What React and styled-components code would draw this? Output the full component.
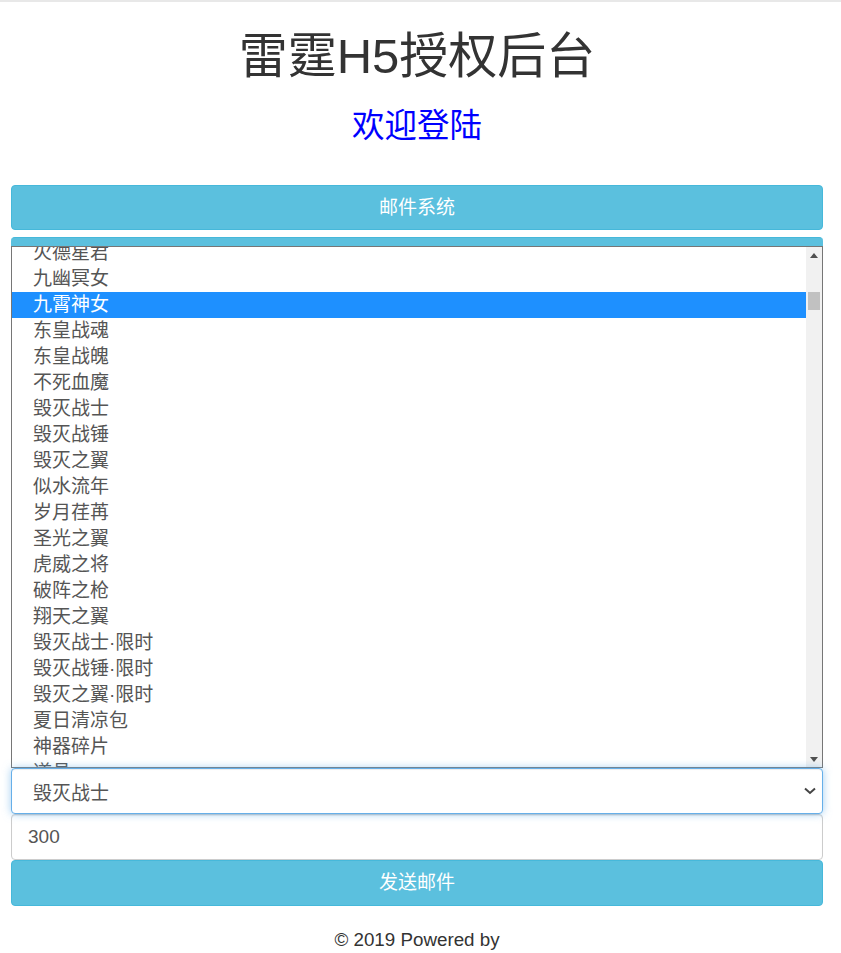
import React from "react";
import styled, { createGlobalStyle } from "styled-components";

const FONT = `"Liberation Sans", "Noto Sans CJK SC", sans-serif`;

const Global = createGlobalStyle`
  html, body { margin: 0; padding: 0; background: #fff; }
  body { font-family: ${FONT}; color: #333; }
  * { box-sizing: border-box; }
`;

const Page = styled.div`
  border-top: 2px solid #e8e8e8;
  padding: 0 18px 0 11px;
  display: flex;
  flex-direction: column;
`;

const Title = styled.h1`
  margin: 28px 0 0;
  font-size: 49px;
  line-height: 52px;
  font-weight: 400;
  text-align: center;
  color: #333;
`;

const Subtitle = styled.h2`
  margin: 27px 0 0;
  font-size: 32.5px;
  line-height: 35px;
  font-weight: 400;
  text-align: center;
  color: #0000ff;
`;

const InfoButton = styled.button`
  display: block;
  width: 100%;
  height: ${(p) => p.$h || 46}px;
  margin-top: ${(p) => p.$mt || 0}px;
  padding: 0 16px;
  border: 1px solid #46b8da;
  border-radius: 4px;
  background: #5bc0de;
  color: #fff;
  font-family: ${FONT};
  font-size: 19px;
  line-height: 1.3333;
`;

const Panel = styled.div`
  margin-top: 7px;
  padding-top: 9px;
  background: #5bc0de;
  border-radius: 4px 4px 0 0;
  border-top: 1px solid #46b8da;
`;

const ListBox = styled.div`
  height: 522px;
  border: 1px solid #767676;
  background: #fff;
  display: flex;
  overflow: hidden;
  margin-top: -1px;
`;

const ListItems = styled.div`
  flex: 1;
  overflow: hidden;
`;

const ListInner = styled.ul`
  list-style: none;
  margin: -7px 0 0;
  padding: 0;
`;

const Option = styled.li`
  height: 26px;
  line-height: 26px;
  padding-left: 21px;
  font-size: 19px;
  color: ${(p) => (p.$selected ? "#fff" : "#555")};
  background: ${(p) => (p.$selected ? "#1e90ff" : "transparent")};
  white-space: nowrap;
`;

const Scrollbar = styled.div`
  width: 16px;
  background: #f1f1f1;
  display: flex;
  flex-direction: column;
  align-items: center;
`;

const ArrowBtn = styled.div`
  height: 16px;
  width: 100%;
  display: flex;
  align-items: center;
  justify-content: center;
`;

const Track = styled.div`
  flex: 1;
  width: 100%;
  padding: 29px 2px 0;
`;

const Thumb = styled.div`
  height: 18px;
  background: #c1c1c1;
`;

const SelectBox = styled.div`
  height: 46px;
  border: 1px solid #66afe9;
  border-radius: 4px;
  box-shadow: inset 0 1px 1px rgba(0, 0, 0, 0.075), 0 0 8px rgba(102, 175, 233, 0.6);
  display: flex;
  align-items: center;
  justify-content: space-between;
  padding: 0 6px 0 21px;
  font-size: 19px;
  color: #555;
  background: #fff;
  position: relative;
  z-index: 1;
`;

const InputBox = styled.div`
  height: 46px;
  border: 1px solid #ccc;
  border-radius: 4px;
  box-shadow: inset 0 1px 1px rgba(0, 0, 0, 0.075);
  display: flex;
  align-items: center;
  padding: 0 16px;
  font-size: 19px;
  color: #555;
`;

const Footer = styled.footer`
  margin-top: 22px;
  text-align: center;
  font-size: 18.8px;
  color: #333;
  line-height: 24px;
`;

const items = [
  "火德星君",
  "九幽冥女",
  "九霄神女",
  "东皇战魂",
  "东皇战魄",
  "不死血魔",
  "毁灭战士",
  "毁灭战锤",
  "毁灭之翼",
  "似水流年",
  "岁月荏苒",
  "圣光之翼",
  "虎威之将",
  "破阵之枪",
  "翔天之翼",
  "毁灭战士·限时",
  "毁灭战锤·限时",
  "毁灭之翼·限时",
  "夏日清凉包",
  "神器碎片",
  "道具",
];

export default function App() {
  return (
    <>
      <Global />
      <Page>
        <Title>雷霆H5授权后台</Title>
        <Subtitle>欢迎登陆</Subtitle>
        <InfoButton $mt={41} $h={45}>邮件系统</InfoButton>
        <Panel>
          <ListBox>
            <ListItems>
              <ListInner>
                {items.map((t) => (
                  <Option key={t} $selected={t === "九霄神女"}>
                    {t}
                  </Option>
                ))}
              </ListInner>
            </ListItems>
            <Scrollbar>
              <ArrowBtn>
                <svg width="8" height="5" viewBox="0 0 8 5">
                  <path d="M0 5 L4 0 L8 5 Z" fill="#505050" />
                </svg>
              </ArrowBtn>
              <Track>
                <Thumb />
              </Track>
              <ArrowBtn>
                <svg width="8" height="5" viewBox="0 0 8 5">
                  <path d="M0 0 L4 5 L8 0 Z" fill="#505050" />
                </svg>
              </ArrowBtn>
            </Scrollbar>
          </ListBox>
        </Panel>
        <SelectBox>
          <span>毁灭战士</span>
          <svg width="12" height="8" viewBox="0 0 12 8">
            <path d="M1 1.5 L6 6 L11 1.5" fill="none" stroke="#444" strokeWidth="2" />
          </svg>
        </SelectBox>
        <InputBox>300</InputBox>
        <InfoButton>发送邮件</InfoButton>
        <Footer>© 2019 Powered by</Footer>
      </Page>
    </>
  );
}
